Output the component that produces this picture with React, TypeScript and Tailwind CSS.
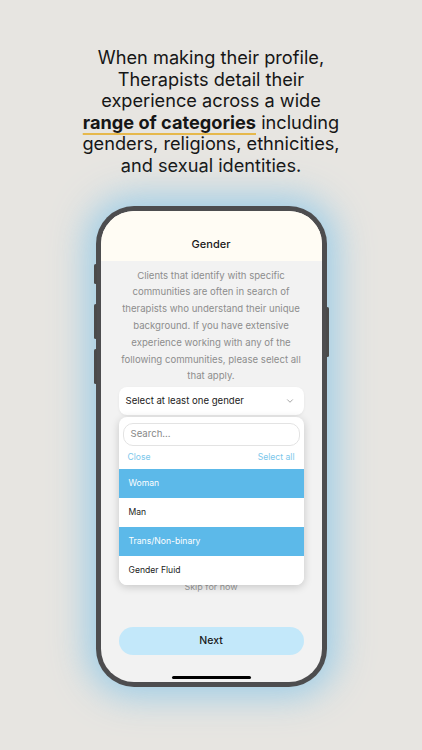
import { ChevronDown } from 'lucide-react';

const options = [
  { label: 'Woman', selected: true },
  { label: 'Man', selected: false },
  { label: 'Trans/Non-binary', selected: true },
  { label: 'Gender Fluid', selected: false },
];

function SideButton({ className }: { className: string }) {
  return <div className={`absolute w-[3px] rounded-sm bg-[#4a4a4a] ${className}`} />;
}

export default function App() {
  return (
    <div
      className="flex h-[750px] w-[422px] flex-col items-center overflow-hidden bg-[#e7e5e1]"
      style={{ fontFamily: 'Inter, "Noto Sans", sans-serif' }}
    >
      {/* Headline */}
      <h1 className="mt-[47px] whitespace-nowrap text-center text-[18.2px] leading-[21.6px] text-[#161616]">
        When making their profile,
        <br />
        Therapists detail their
        <br />
        experience across a wide
        <br />
        <span className="font-bold underline decoration-[#e6b84c] decoration-2 underline-offset-[4px]">
          range of categories
        </span>{' '}
        including
        <br />
        genders, religions, ethnicities,
        <br />
        and sexual identities.
      </h1>

      {/* Phone */}
      <div className="relative mt-[29px] h-[481px] w-[231px]">
        <SideButton className="-left-[2px] top-[58px] h-[20px]" />
        <SideButton className="-left-[2px] top-[98px] h-[35px]" />
        <SideButton className="-left-[2px] top-[143px] h-[35px]" />
        <SideButton className="-right-[2px] top-[101px] h-[50px]" />

        <div className="h-full w-full rounded-[38px] bg-[#4d4d4f] p-[5px] shadow-[0_0_34px_10px_rgba(135,198,232,0.75)]">
          <div className="relative flex h-full flex-col overflow-hidden rounded-[33px] bg-[#f2f2f2]">
            {/* Header */}
            <div className="flex h-[50px] shrink-0 items-end justify-center bg-[#fffcf4] pb-[8px]">
              <span className="text-[11px] font-medium text-[#1a1a1a]">Gender</span>
            </div>

            {/* Description */}
            <p className="mx-auto mt-[7px] w-[190px] text-center text-[9.6px] leading-[16.8px] text-[#8d8d8d]">
              Clients that identify with specific communities are often in search of therapists who
              understand their unique background. If you have extensive experience working with any
              of the following communities, please select all that apply.
            </p>

            {/* Select */}
            <div className="relative mx-[18px] mt-[2px]">
              <div className="flex h-[28px] items-center justify-between rounded-[8px] bg-white pl-[7px] pr-[9px] shadow-[0_1px_3px_rgba(0,0,0,0.06)]">
                <span className="text-[9.6px] text-[#222]">Select at least one gender</span>
                <ChevronDown className="h-[10px] w-[10px] text-[#777]" strokeWidth={1.6} />
              </div>

              {/* Dropdown menu */}
              <div className="absolute left-0 right-0 top-[30px] z-10 overflow-hidden rounded-[8px] bg-white shadow-[0_2px_8px_rgba(0,0,0,0.18)]">
                <div className="px-[4px] pt-[6px]">
                  <div className="flex h-[23px] items-center rounded-[10px] border border-[#e3e3e3] px-[7px] text-[9.6px] text-[#888]">
                    Search...
                  </div>
                </div>
                <div className="flex h-[23px] items-center justify-between px-[9px] text-[8.6px] text-[#7cc7eb]">
                  <span>Close</span>
                  <span>Select all</span>
                </div>
                {options.map((o) => (
                  <div
                    key={o.label}
                    className={`flex h-[29px] items-center px-[10px] text-[8.6px] ${
                      o.selected ? 'bg-[#5cb9e9] text-white' : 'bg-white text-[#222]'
                    }`}
                  >
                    {o.label}
                  </div>
                ))}
              </div>
            </div>

            <p className="mt-[165px] text-center text-[9px] text-[#999]">Skip for now</p>

            {/* Next */}
            <div className="mx-[18px] mt-[33px] flex h-[28px] items-center justify-center rounded-full bg-[#c3e8fa]">
              <span className="text-[10.5px] font-medium text-[#1a1a1a]">Next</span>
            </div>

            <div className="mx-auto mt-[21px] h-[3px] w-[79px] rounded-full bg-black" />
          </div>
        </div>
      </div>
    </div>
  );
}
